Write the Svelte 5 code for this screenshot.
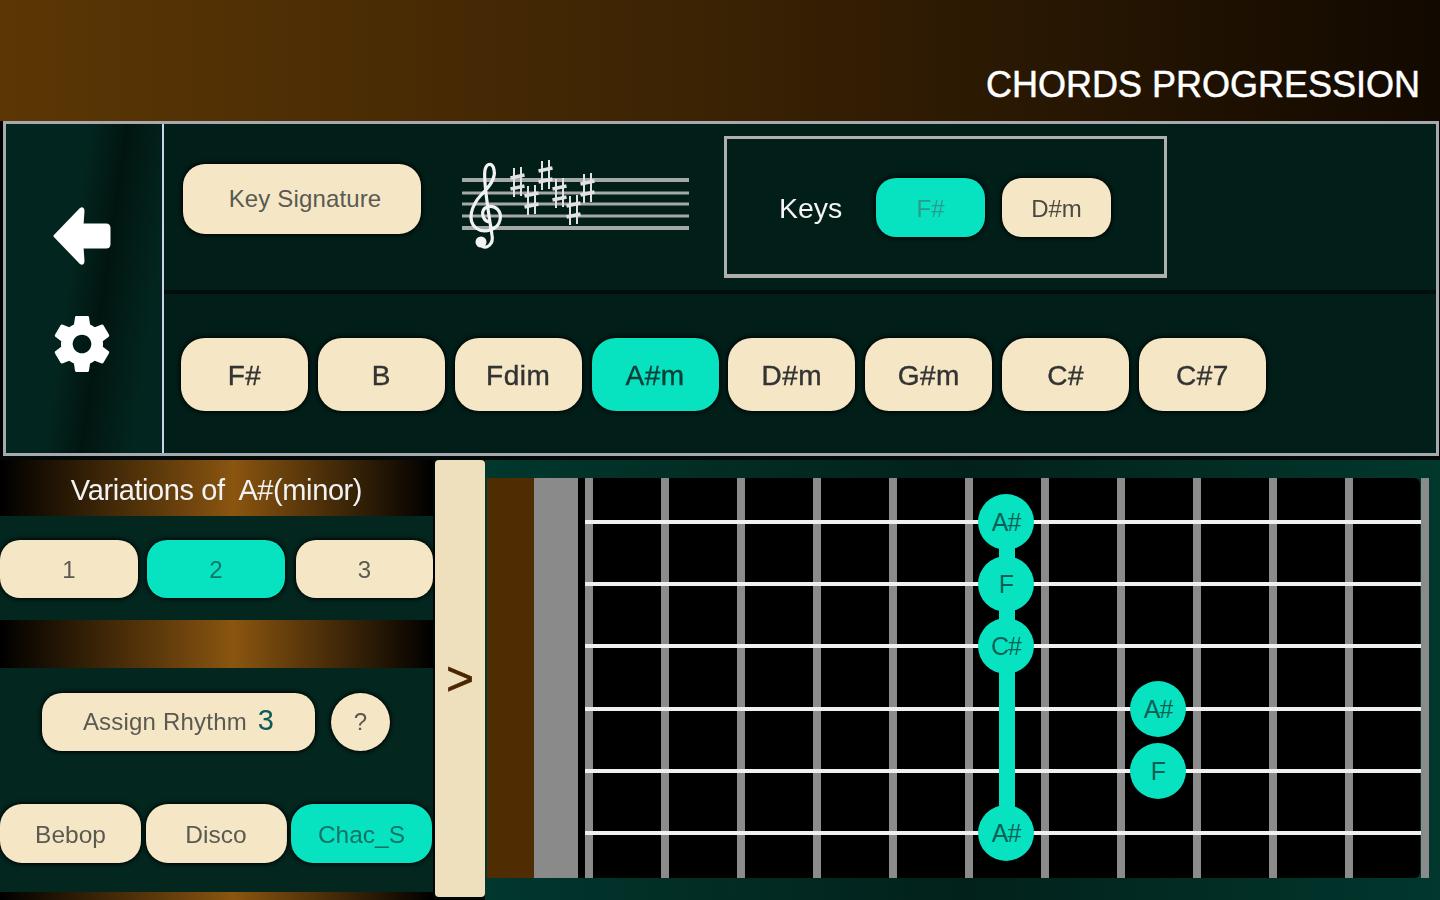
<script>
  const chords = ['F#', 'B', 'Fdim', 'A#m', 'D#m', 'G#m', 'C#', 'C#7'];
  const variations = ['1', '2', '3'];
  const rhythms = ['Bebop', 'Disco', 'Chac_S'];
  const staffLines = [[30, 4], [43, 3], [54, 3], [66, 3], [78, 4]];
  const sharps = [[77, 32], [91, 50], [105, 25], [119, 43], [133, 60], [147, 38]];
  const fretXs = [0, 76, 152, 228, 304, 380, 456, 532, 608, 684, 760, 836];
  const stringYs = [44, 106, 168, 231, 293, 355];
  const notes = [
    { x: 400, s: 0, label: 'A#' },
    { x: 400, s: 1, label: 'F' },
    { x: 400, s: 2, label: 'C#' },
    { x: 552, s: 3, label: 'A#' },
    { x: 552, s: 4, label: 'F' },
    { x: 400, s: 5, label: 'A#' }
  ];
</script>

<div class="page">
  <header class="header"><h1>CHORDS PROGRESSION</h1></header>

  <section class="panel">
    <nav class="side">
      <svg class="arrow" viewBox="0 0 60 60" aria-label="Back">
        <path d="M3 30 L29 3 Q31 2 31 5 L30 19 H54 Q57 19 57 22 V38 Q57 41 54 41 H30 L31 55 Q31 58 29 57 Z" />
      </svg>
      <svg class="gear" viewBox="0 0 24 24" aria-label="Settings">
        <path d="M19.14 12.94c.04-.3.06-.61.06-.94 0-.32-.02-.64-.07-.94l2.03-1.58c.18-.14.23-.41.12-.61l-1.92-3.32c-.12-.22-.37-.29-.59-.22l-2.39.96c-.5-.38-1.03-.7-1.62-.94l-.36-2.54c-.04-.24-.24-.41-.48-.41h-3.84c-.24 0-.43.17-.47.41l-.36 2.54c-.59.24-1.13.57-1.62.94l-2.39-.96c-.22-.08-.47 0-.59.22L2.74 8.87c-.12.21-.08.47.12.61l2.03 1.58c-.05.3-.09.63-.09.94s.02.64.07.94l-2.03 1.58c-.18.14-.23.41-.12.61l1.92 3.32c.12.22.37.29.59.22l2.39-.96c.5.38 1.03.7 1.62.94l.36 2.54c.05.24.24.41.48.41h3.84c.24 0 .44-.17.47-.41l.36-2.54c.59-.24 1.13-.56 1.62-.94l2.39.96c.22.08.47 0 .59-.22l1.92-3.32c.12-.22.07-.47-.12-.61l-2.01-1.58zM12 15.2c-1.76 0-3.2-1.44-3.2-3.2s1.44-3.2 3.2-3.2 3.2 1.44 3.2 3.2-1.44 3.2-3.2 3.2z" />
      </svg>
    </nav>

    <div class="content">
      <div class="top-row">
        <button class="btn key-sig">Key Signature</button>
        <svg class="staff" viewBox="0 0 270 110" aria-label="Staff with six sharps">
          {#each staffLines as [y, h]}
            <rect x="22" y={y - h / 2} width="227" height={h} fill="#a4a8a6" />
          {/each}
          <path class="clef" d="M49 72 C42 70 40 60 47 57 C56 54 62 62 60 70 C58 80 44 84 36 78 C27 71 31 56 41 45 C50 36 56 28 54 20 C53 13 47 12 45 20 C43 30 48 60 52 85 C54 95 46 99 42 96" />
          <circle cx="41" cy="92" r="5.5" fill="#f2f2f2" />
          {#each sharps as [x, y]}
            <g class="sharp" transform="translate({x} {y})">
              <path d="M-3 -14 V15 M4 -15 V14" />
              <path class="bar" d="M-6.5 -4 L7.5 -7 M-6.5 7 L7.5 4" />
            </g>
          {/each}
        </svg>
        <div class="keys">
          <span class="keys-label">Keys</span>
          <button class="btn key on">F#</button>
          <button class="btn key">D#m</button>
        </div>
      </div>
      <div class="chord-row">
        {#each chords as c}
          <button class="btn chord" class:on={c === 'A#m'}>{c}</button>
        {/each}
      </div>
    </div>
  </section>

  <main class="lower">
    <aside class="left">
      <div class="bar title">Variations of&nbsp; A#(minor)</div>
      <div class="vars">
        {#each variations as v}
          <button class="btn var" class:on={v === '2'}>{v}</button>
        {/each}
      </div>
      <div class="bar plain"></div>
      <div class="assign">
        <button class="btn rhythm">Assign Rhythm <b>3</b></button>
        <button class="btn help">?</button>
      </div>
      <div class="styles">
        {#each rhythms as r}
          <button class="btn style" class:on={r === 'Chac_S'}>{r}</button>
        {/each}
      </div>
      <div class="bar foot"></div>
    </aside>

    <button class="collapse">&gt;</button>

    <div class="fret-area">
      <div class="nut"></div>
      <div class="saddle"></div>
      <div class="board">
        {#each fretXs as x}
          <i class="fret" style="left:{x + 7}px"></i>
        {/each}
        {#each stringYs as y}
          <i class="string" style="top:{y - 2}px"></i>
        {/each}
        <i class="barre"></i>
        {#each notes as n}
          <span class="note" style="left:{n.x}px;top:{stringYs[n.s]}px">{n.label}</span>
        {/each}
      </div>
    </div>
  </main>
</div>

<style>
  :global(body) { margin: 0; background: #000; }
  .page {
    width: 1440px; height: 900px; overflow: hidden;
    display: flex; flex-direction: column;
    font-family: "Liberation Sans", Arial, sans-serif;
    filter: blur(0.55px);
  }
  .header {
    height: 121px; flex: none; box-sizing: border-box;
    display: flex; justify-content: flex-end; align-items: flex-end;
    padding: 0 20px 14px;
    background: linear-gradient(90deg, #5c3705 0%, #3a2204 50%, #120900 100%);
  }
  h1 { margin: 0; font-size: 36px; font-weight: 400; line-height: 44px; color: #fff; -webkit-text-stroke: 0.5px #fff; }

  .btn {
    border: 0; padding: 2px 0 0; background: #f5e7c6; color: #5a5a52;
    font-family: inherit; box-shadow: 0 0 4px 1px #000;
  }
  .btn.on { background: #07e2c1; color: #0f7467; }

  .panel {
    height: 335px; flex: none; box-sizing: border-box; margin: 0 1px 0 3px;
    border: 3px solid #a6a9ad; display: flex; background: #021e18;
  }
  .side {
    width: 156px; flex: none; box-sizing: border-box;
    display: flex; flex-direction: column; align-items: center;
    padding: 82px 4px 0 0;
    background: linear-gradient(98deg, #03251f 0%, #03251f 42%, #011510 60%, #03251f 85%, #03251f 100%);
  }
  .arrow { width: 60px; height: 60px; fill: #fff; stroke: #fff; stroke-width: 3; stroke-linejoin: round; flex: none; }
  .gear { width: 70px; height: 70px; fill: #fff; margin-top: 43px; flex: none; }
  .content { flex: 1; display: flex; flex-direction: column; border-left: 2px solid #ccd2ee; min-width: 0; }
  .top-row {
    height: 166px; flex: none;
    display: flex; align-items: flex-start; padding-left: 19px;
    border-bottom: 4px solid #000d0a;
  }
  .key-sig { width: 238px; height: 70px; margin-top: 40px; border-radius: 22px; font-size: 24px; padding: 0 0 0 6px; letter-spacing: 0.15px; }
  .staff { width: 270px; height: 110px; margin: 26px 0 0 19px; flex: none; }
  .clef { fill: none; stroke: #f2f2f2; stroke-width: 3.2; }
  .sharp path { fill: none; stroke: #e2e2e2; stroke-width: 2; }
  .sharp .bar { stroke-width: 3.6; }
  .keys {
    width: 443px; height: 142px; box-sizing: border-box; margin: 12px 0 0 14px;
    border: 3px solid #aeb0ae; border-bottom-width: 4px;
    display: flex; align-items: center; padding: 4px 0 0 52px;
  }
  .keys-label { color: #f4f4f4; font-size: 28.5px; width: 97px; flex: none; }
  .key { width: 109px; height: 59px; border-radius: 20px; font-size: 24px; margin-right: 17px; margin-top: -2px; color: #4a4a42; }
  .key.on { color: #2b9c8c; }

  .chord-row { flex: 1; display: flex; align-items: center; padding: 1px 0 0 17px; gap: 9.85px; }
  .chord { width: 127px; height: 73px; border-radius: 24px; font-size: 28px; color: #333; letter-spacing: 0.5px; -webkit-text-stroke: 0.4px #333; padding-top: 4px; }
  .chord.on { color: #0a3d36; -webkit-text-stroke: 0.4px #0a3d36; }

  .lower { flex: 1; display: flex; padding-top: 4px; min-height: 0; background: #010806; }
  .left { width: 433px; flex: none; display: flex; flex-direction: column; background: #03261f; }
  .bar { background: linear-gradient(90deg, #000 0%, #8a5510 54%, #000 100%); flex: none; }
  .title { height: 56px; line-height: 60px; text-align: center; color: #f2f2f2; font-size: 29px; letter-spacing: -0.4px; }
  .vars { display: flex; justify-content: space-between; margin-top: 24px; height: 58px; flex: none; }
  .var { width: 138px; border-radius: 20px; font-size: 24px; padding-top: 2px; }
  .vars .var:nth-child(2) { margin-left: 9px; }
  .vars .var:nth-child(3) { width: 137px; margin-left: 11px; }
  .plain { height: 48px; margin-top: 22px; }
  .assign { display: flex; margin: 25px 0 0 42px; height: 58px; flex: none; gap: 16px; }
  .rhythm { width: 273px; border-radius: 20px; font-size: 24px; letter-spacing: 0.2px; padding: 0 0 3px; }
  .rhythm b { font-weight: 400; font-size: 29px; color: #0b5a58; margin-left: 4px; }
  .help { width: 59px; border-radius: 50%; font-size: 24px; padding: 0; }
  .styles { display: flex; gap: 4.5px; margin-top: 53px; height: 59px; flex: none; }
  .style { width: 141px; border-radius: 22px; font-size: 24.5px; padding-top: 3px; }
  .foot { height: 12px; margin-top: 29px; }

  .collapse {
    width: 50px; margin: 0 0 3px 2px; flex: none;
    border: 0; border-radius: 4px; background: #efe0bd; color: #4a2500;
    font-family: inherit; font-size: 48px; line-height: 1;
    padding: 0;
    -webkit-text-stroke: 0.6px #4a2500;
  }

  .fret-area {
    flex: 1; display: flex; padding: 18px 0 22px 2px; min-width: 0;
    background: linear-gradient(90deg, #01372d, #02211b 50%, #01372d);
  }
  .nut { width: 47px; background: #4f2c02; flex: none; }
  .saddle { width: 44px; background: #8a8a8a; flex: none; }
  .board { position: relative; width: 842px; background: #000; border-radius: 0 6px 6px 0; flex: none; }
  .fret { position: absolute; top: 0; bottom: 0; width: 8px; background: #8b8b8b; }
  .string { position: absolute; left: 7px; width: 836px; height: 4px; background: #f0f0f0; }
  .barre { position: absolute; left: 421px; top: 44px; width: 16px; height: 311px; background: #07e2c1; }
  .note {
    position: absolute; width: 56px; height: 56px; margin: -28px 0 0 0;
    border-radius: 50%; background: #07e2c1; color: #0b5f55;
    font-size: 25px; line-height: 56px; text-align: center; letter-spacing: -1px;
  }
</style>
